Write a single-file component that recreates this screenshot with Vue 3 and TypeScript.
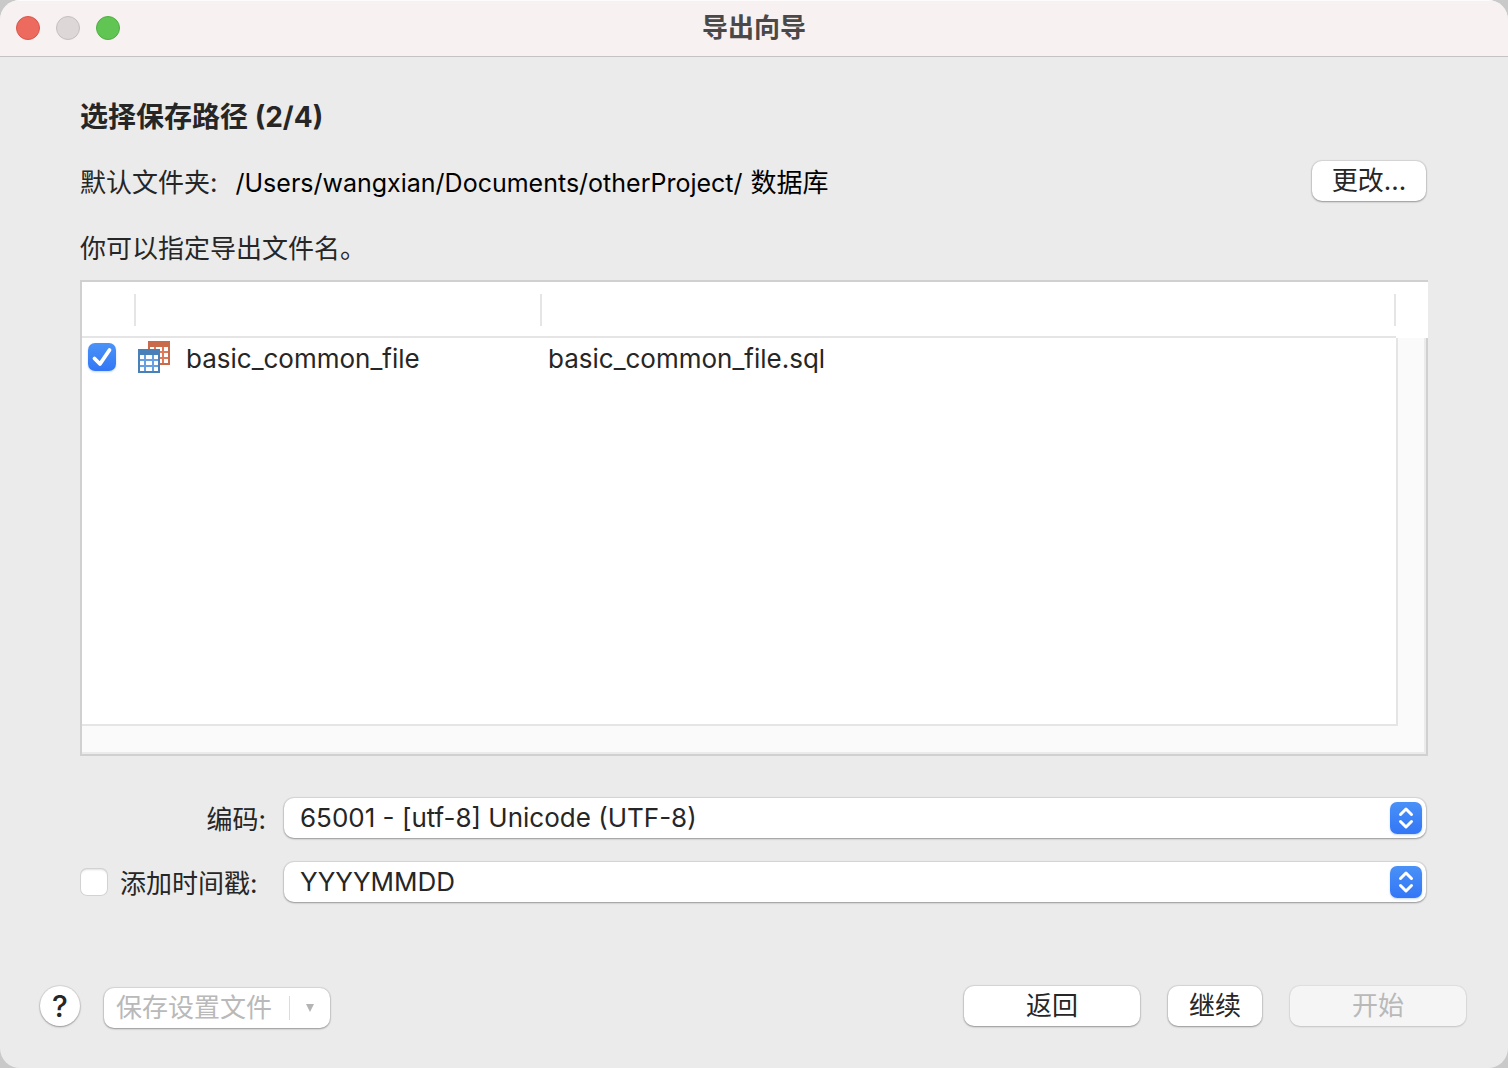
<script setup lang="ts">
import { ref } from 'vue'

interface ExportItem {
  name: string
  file: string
  selected: boolean
}

const folder = { parent: '/Users/wangxian/Documents/otherProject/', name: '数据库' }
const items = ref<ExportItem[]>([
  { name: 'basic_common_file', file: 'basic_common_file.sql', selected: true },
])
const encodings = ['65001 - [utf-8] Unicode (UTF-8)']
const stamps = ['YYYYMMDD']
const encoding = ref(encodings[0])
const stamp = ref(stamps[0])
const addStamp = ref(false)
</script>

<template>
  <div class="window">
    <header class="titlebar">
      <div class="lights">
        <button class="light close" type="button" aria-label="关闭"></button>
        <button class="light minimize" type="button" aria-label="最小化" disabled></button>
        <button class="light zoom" type="button" aria-label="缩放"></button>
      </div>
      <h1>导出向导</h1>
    </header>

    <main class="content">
      <h2>选择保存路径 (2/4)</h2>

      <div class="folder">
        <span class="folder-label">默认文件夹:</span>
        <span class="path"><span class="parent">{{ folder.parent }}</span><span>{{ folder.name }}</span></span>
        <button class="btn change" type="button">更改...</button>
      </div>

      <p class="hint">你可以指定导出文件名。</p>

      <div class="frame">
        <div class="list">
          <table>
            <colgroup>
              <col class="col-check" />
              <col class="col-name" />
              <col />
            </colgroup>
            <thead>
              <tr>
                <th v-for="n in 3" :key="n"><div class="divider"></div></th>
              </tr>
            </thead>
            <tbody>
              <tr v-for="item in items" :key="item.name">
                <td class="cell-check">
                  <span class="tick">
                    <input v-model="item.selected" type="checkbox" :aria-label="item.name" />
                    <svg v-if="item.selected" viewBox="0 0 28 28" aria-hidden="true">
                      <path d="M6.500 15.500L12 21L21.500 7" fill="none" stroke="#fff" stroke-width="3.800" stroke-linecap="round" stroke-linejoin="round" />
                    </svg>
                  </span>
                </td>
                <td>
                  <div class="name">
                    <svg class="table-icon" viewBox="0 0 32 32" aria-hidden="true" shape-rendering="crispEdges">
                      <rect x="10" y="0" width="22" height="24" fill="#c96a4a" />
                      <path d="M12 6h18v16H12z" fill="#e0785a" />
                      <path d="M12 6h4v4h-4zM18 6h6v4h-6zM26 6h4v4h-4zM18 12h6v4h-6zM26 12h4v4h-4zM18 18h6v4h-6zM26 18h4v4h-4z" fill="#fff" />
                      <rect x="0" y="8" width="22" height="24" fill="#4a80b8" />
                      <path d="M2 14h18v16H2z" fill="#65a0e0" />
                      <path d="M2 14h4v4H2zM8 14h6v4H8zM16 14h4v4h-4zM2 20h4v4H2zM8 20h6v4H8zM16 20h4v4h-4zM2 26h4v4H2zM8 26h6v4H8zM16 26h4v4h-4z" fill="#fff" />
                    </svg>
                    <span>{{ item.name }}</span>
                  </div>
                </td>
                <td class="cell-file">{{ item.file }}</td>
              </tr>
            </tbody>
          </table>
        </div>
        <div class="side">
          <div class="corner"></div>
          <div class="track-y"></div>
        </div>
        <div class="track-x"></div>
      </div>

      <div class="form">
        <label class="caption end" for="encoding">编码:</label>
        <div class="popup">
          <select id="encoding" v-model="encoding">
            <option v-for="e in encodings" :key="e">{{ e }}</option>
          </select>
          <svg viewBox="0 0 32 32" aria-hidden="true">
            <path d="M10.500 12.500L16 7L21.500 12.500M10.500 19.500L16 25L21.500 19.500" />
          </svg>
        </div>

        <div class="caption stamp">
          <span class="tick">
            <input id="add-stamp" v-model="addStamp" type="checkbox" />
          </span>
          <label for="add-stamp">添加时间戳:</label>
        </div>
        <div class="popup">
          <select v-model="stamp" aria-label="时间戳格式">
            <option v-for="s in stamps" :key="s">{{ s }}</option>
          </select>
          <svg viewBox="0 0 32 32" aria-hidden="true">
            <path d="M10.500 12.500L16 7L21.500 12.500M10.500 19.500L16 25L21.500 19.500" />
          </svg>
        </div>
      </div>
    </main>

    <footer class="actions">
      <button class="btn help" type="button" aria-label="帮助">?</button>
      <button class="btn save" type="button" disabled>
        <span>保存设置文件</span>
        <span class="rule"></span>
        <svg viewBox="0 0 8 8" aria-hidden="true"><path d="M0 0H8L4 8Z" fill="#b4b4b4" /></svg>
      </button>
      <span class="spacer"></span>
      <button class="btn wide" type="button">返回</button>
      <button class="btn next" type="button">继续</button>
      <button class="btn wide off" type="button" disabled>开始</button>
    </footer>
  </div>
</template>

<style>
body {
  margin: 0;
  background: #c9c9c9;
}
</style>

<style scoped>
.window,
.window * {
  box-sizing: border-box;
}
.window {
  display: flex;
  flex-direction: column;
  min-height: 100vh;
  overflow: hidden;
  border-radius: 20px;
  background: #ebebeb;
  color: #262626;
  font: 26px/40px Inter, "Noto Sans CJK SC", sans-serif;
}
button,
select {
  margin: 0;
  border: 0;
  color: inherit;
  font: inherit;
}

.titlebar {
  display: grid;
  grid-template-columns: 1fr auto 1fr;
  align-items: center;
  height: 57px;
  padding: 0 16px;
  border-bottom: 1px solid #c4c2c2;
  background: #f7f1f1;
  box-shadow: inset 0 1px #fdfbfb;
}
.lights {
  display: flex;
  gap: 16px;
}
.light {
  width: 24px;
  height: 24px;
  padding: 0;
  border: 1px solid;
  border-radius: 50%;
}
.close {
  border-color: #d8564b;
  background: #ed6a5e;
}
.minimize {
  border-color: #c5bfbf;
  background: #ddd7d7;
}
.zoom {
  border-color: #50ae42;
  background: #61c554;
}
h1 {
  margin: 0;
  color: #4b4848;
  font-size: 26px;
  font-weight: 600;
}

.content {
  display: flex;
  flex: 1;
  flex-direction: column;
  padding: 40px 80px 0;
}
h2 {
  margin: 0;
  font-size: 28px;
  font-weight: 700;
}
.folder {
  display: flex;
  align-items: flex-start;
  margin-top: 24px;
  padding-right: 2px;
}
.folder-label,
.path {
  padding-top: 2px;
}
.path {
  margin-left: 18px;
  color: #000;
}
.parent {
  margin-right: 8px;
  font-size: 25px;
}
.hint {
  margin: 26px 0 11px;
}

.btn {
  height: 40px;
  padding: 0;
  border-radius: 10px;
  background: #fff;
  line-height: 38px;
  box-shadow: 0 0 1px 1px rgba(0, 0, 0, 0.09), 0 1px 2px rgba(0, 0, 0, 0.3);
}
.change {
  width: 114px;
  margin-left: auto;
}

.frame {
  display: grid;
  flex: 1;
  grid-template-rows: 1fr 28px;
  grid-template-columns: 1fr 32px;
  min-height: 240px;
  border: solid #d0d0d0;
  border-width: 2px 0 2px 2px;
  background: #fff;
}
.list {
  border-bottom: 2px solid #e5e5e5;
}
table {
  width: 100%;
  border-spacing: 0;
  table-layout: fixed;
}
.col-check {
  width: 54px;
}
.col-name {
  width: 406px;
}
th {
  padding: 12px 0 10px;
  border-bottom: 2px solid #e5e5e5;
}
.divider {
  height: 32px;
  border-right: 2px solid #e5e5e5;
}
td {
  height: 42px;
  padding: 0;
}
.cell-check {
  padding: 0 0 4px 6px;
  vertical-align: middle;
}
.cell-file {
  padding-left: 6px;
}
.name {
  display: flex;
  align-items: center;
  gap: 16px;
  padding-left: 2px;
}
.table-icon {
  width: 32px;
  height: 32px;
  margin-bottom: 4px;
}
.side {
  display: flex;
  flex-direction: column;
}
.corner {
  height: 56px;
}
.track-y {
  flex: 1;
  border-right: 2px solid #d0d0d0;
  background: #fafafa;
  box-shadow: inset -2px 0 #ebebeb;
}
.track-y::before {
  display: block;
  width: 2px;
  height: 100%;
  background: #e5e5e5;
  content: "";
}
.track-x {
  grid-column: 1 / -1;
  border-right: 2px solid #d0d0d0;
  background: #fafafa;
  box-shadow: inset -2px -2px #ebebeb;
}

.tick {
  display: grid;
  width: 28px;
  height: 28px;
}
.tick > * {
  grid-area: 1 / 1;
  width: 28px;
  height: 28px;
  margin: 0;
  pointer-events: none;
}
.tick input {
  appearance: none;
  border-radius: 7px;
  background: #fff;
  box-shadow: inset 0 0 0 1px #d2d2d2, inset 0 2px 2px rgba(0, 0, 0, 0.12);
  pointer-events: auto;
}
.tick input:checked {
  background: linear-gradient(#4a93f8, #3376f6);
  box-shadow: 0 1px 2px rgba(51, 118, 246, 0.3);
}

.form {
  display: grid;
  grid-template-rows: 40px 40px;
  grid-template-columns: 186px 1fr;
  gap: 24px 18px;
  margin-top: 42px;
  padding-right: 2px;
}
.caption {
  padding-top: 2px;
  line-height: 40px;
}
.end {
  justify-self: end;
}
.stamp {
  display: flex;
  gap: 12px;
}
.stamp .tick {
  margin-top: 4px;
}
.popup {
  display: grid;
  height: 40px;
  border-radius: 10px;
  background: #fff;
  box-shadow: 0 0 1px 1px rgba(0, 0, 0, 0.09), 0 1px 2px rgba(0, 0, 0, 0.3);
}
.popup > * {
  grid-area: 1 / 1;
}
.popup select {
  width: 100%;
  height: 40px;
  padding: 0 48px 2px 16px;
  background: transparent;
  appearance: none;
}
.popup svg {
  justify-self: end;
  width: 32px;
  height: 32px;
  margin: 4px;
  border-radius: 7px;
  background: linear-gradient(#4a91f7, #3376f6);
  box-shadow: 0 1px 2px rgba(51, 118, 246, 0.3);
  fill: none;
  pointer-events: none;
  stroke: #fff;
  stroke-linecap: round;
  stroke-linejoin: round;
  stroke-width: 3;
}

.actions {
  display: flex;
  align-items: flex-start;
  padding: 84px 42px 40px 40px;
}
.help {
  width: 40px;
  border-radius: 50%;
  font-size: 30px;
  font-weight: 500;
  line-height: 40px;
}
.save {
  display: flex;
  align-items: center;
  width: 226px;
  margin: 2px 0 0 24px;
  padding: 0 16px 0 12px;
  color: #b9b9b9;
}
.rule {
  width: 1px;
  height: 24px;
  margin: 0 16px 0 auto;
  background: #dcdcdc;
}
.save svg {
  width: 8px;
  height: 8px;
}
.spacer {
  flex: 1;
}
.wide {
  width: 176px;
}
.next {
  width: 94px;
  margin: 0 28px;
}
.off {
  background: #f5f5f5;
  color: #b9b9b9;
  box-shadow: 0 0 1px 1px rgba(0, 0, 0, 0.05), 0 1px 2px rgba(0, 0, 0, 0.12);
}
</style>
